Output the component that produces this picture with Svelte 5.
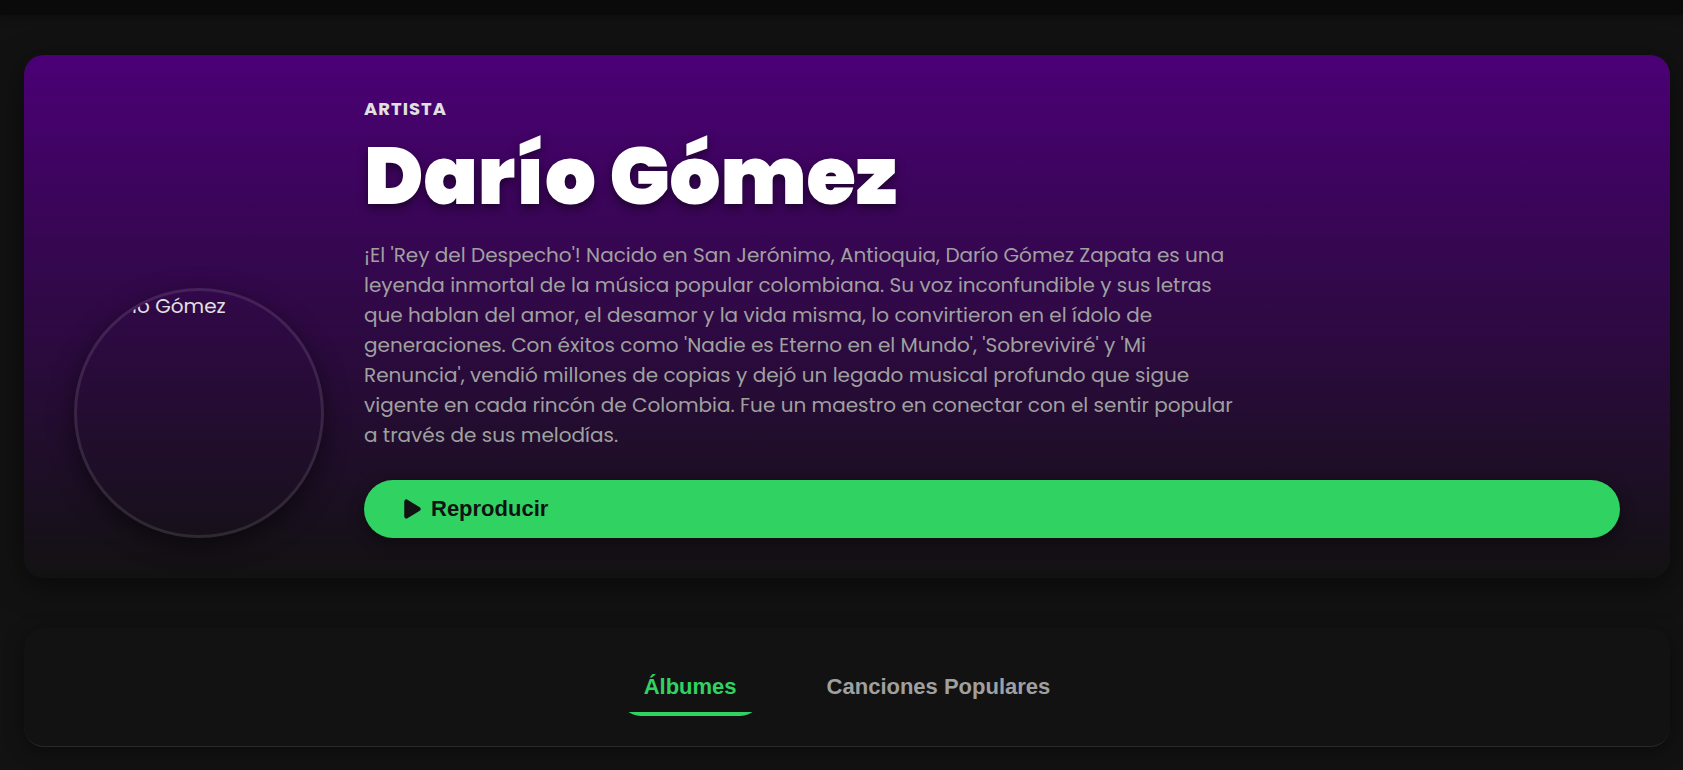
<script>
  const artist = {
    name: 'Darío Gómez',
    bio: "¡El 'Rey del Despecho'! Nacido en San Jerónimo, Antioquia, Darío Gómez Zapata es una leyenda inmortal de la música popular colombiana. Su voz inconfundible y sus letras que hablan del amor, el desamor y la vida misma, lo convirtieron en el ídolo de generaciones. Con éxitos como 'Nadie es Eterno en el Mundo', 'Sobreviviré' y 'Mi Renuncia', vendió millones de copias y dejó un legado musical profundo que sigue vigente en cada rincón de Colombia. Fue un maestro en conectar con el sentir popular a través de sus melodías."
  };
  const tabs = ['Álbumes', 'Canciones Populares'];
  let active = $state(0);
</script>

<header class="topbar"></header>

<main class="page">
  <section class="hero">
    <div class="portrait" role="img" aria-label={artist.name}><span>{artist.name}</span></div>
    <div class="info">
      <span class="kind">ARTISTA</span>
      <h1>{artist.name}</h1>
      <p>{artist.bio}</p>
      <button class="play">
        <svg viewBox="0 0 384 512" aria-hidden="true">
          <path d="M73 39c-14.800-9.100-33.400-9.400-48.500-.9S0 62.600 0 80V432c0 17.400 9.400 33.400 24.500 41.900s33.700 8.100 48.500-.9L361 297c14.300-8.700 23-24.200 23-41s-8.700-32.200-23-41L73 39z" />
        </svg>
        <span>Reproducir</span>
      </button>
    </div>
  </section>

  <nav class="tabs">
    {#each tabs as tab, i}
      <button class="tab" class:active={active === i} onclick={() => (active = i)}>{tab}</button>
    {/each}
  </nav>
</main>

<style>
  :global(body) {
    background: #121212;
    color: #e0e0e0;
    font: 20px/30px Poppins, Inter, sans-serif;
  }

  .topbar {
    height: 15px;
    background: #0a0a0a;
    box-shadow: 0 2px 10px rgba(0, 0, 0, 0.3);
  }

  .page {
    display: flex;
    flex-direction: column;
    gap: 50px;
    padding: 40px 13px 23px 24px;
    overflow: hidden;
  }

  .hero {
    display: flex;
    align-items: flex-end;
    gap: 40px;
    padding: 40px 50px;
    border-radius: 20px;
    background: linear-gradient(to bottom, #4b0076, #121212);
    box-shadow: 0 8px 30px rgba(0, 0, 0, 0.5);
  }

  .portrait {
    flex: none;
    box-sizing: border-box;
    width: 250px;
    height: 250px;
    padding-left: 20px;
    border: 3px solid rgba(255, 255, 255, 0.1);
    border-radius: 50%;
    overflow: hidden;
    box-shadow: 0 8px 25px rgba(0, 0, 0, 0.5);
  }

  .info {
    flex: 1;
    display: flex;
    flex-direction: column;
  }

  .kind {
    font-size: 18px;
    line-height: 27px;
    font-weight: 700;
    letter-spacing: 1px;
  }

  h1 {
    margin: 10px 0 20px;
    color: #fff;
    font-size: 80px;
    line-height: 88px;
    font-weight: 900;
    text-shadow: 0 4px 10px rgba(0, 0, 0, 0.5);
  }

  p {
    max-width: 880px;
    margin: 0 0 30px;
    color: #a0a0a0;
  }

  button {
    min-height: 58px;
    padding: 0 25px 1px;
    border: 0;
    font: 700 22px/24px "Liberation Sans", Arial, sans-serif;
    cursor: pointer;
  }

  .play {
    display: flex;
    align-items: center;
    gap: 10px;
    padding: 0 40px 1px;
    border-radius: 50px;
    background: #30d362;
    color: #121212;
    box-shadow: 0 5px 15px rgba(0, 0, 0, 0.4);
  }

  .play svg {
    width: 17px;
    height: 22px;
    fill: currentColor;
  }

  .tabs {
    display: flex;
    justify-content: center;
    gap: 40px;
    padding: 30px;
    border-bottom: 1px solid #282828;
    border-radius: 20px;
    background: #121212;
    box-shadow: 0 4px 20px rgba(0, 0, 0, 0.4);
  }

  .tab {
    border-radius: 22px;
    background: transparent;
    color: #a0a0a0;
  }

  .tab.active {
    color: #30d362;
    background: linear-gradient(#30d362, #30d362) bottom / 100% 4px no-repeat;
  }
</style>
